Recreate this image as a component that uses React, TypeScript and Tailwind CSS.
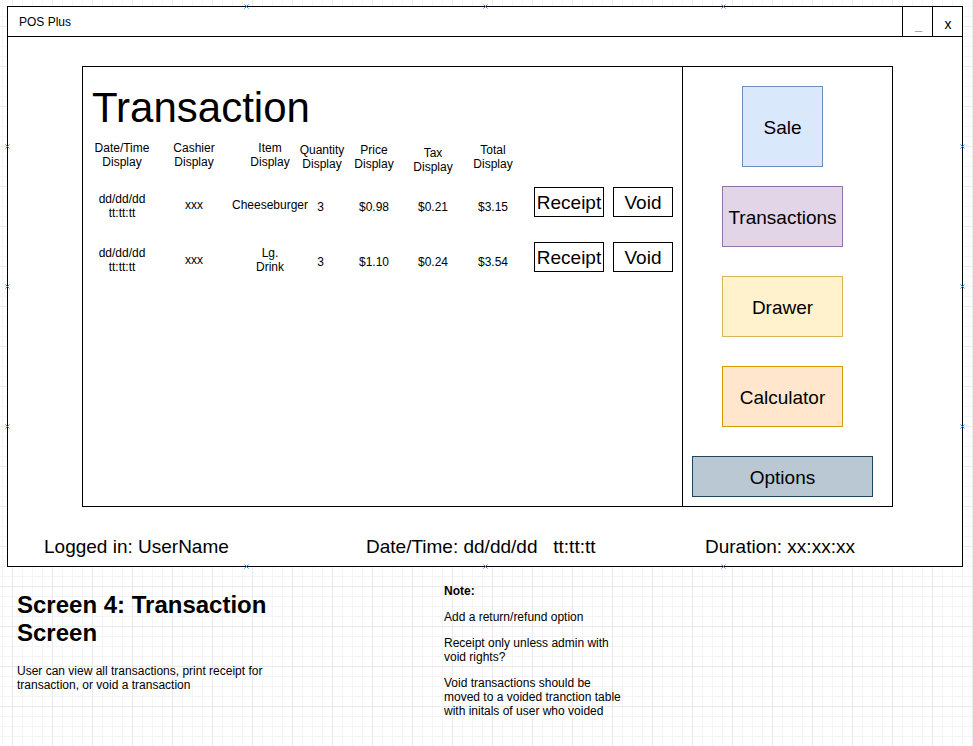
import React from 'react'

// draw.io connection markers sitting on the window frame
const markers: [number, number][] = [
  [246, 6], [485, 6], [723, 6],
  [7, 146], [962, 146], [7, 286], [962, 286], [7, 426], [962, 426],
  [246, 566], [485, 566], [723, 566],
]

function Marker({ x, y }: { x: number; y: number }) {
  return (
    <svg
      className="absolute"
      style={{ left: x - 3, top: y - 3 }}
      width="7"
      height="7"
      viewBox="0 0 7 7"
      aria-hidden="true"
    >
      <path d="M1.5 1.5 L5.5 5.5 M5.5 1.5 L1.5 5.5" stroke="#3b82d6" strokeWidth="1" fill="none" />
    </svg>
  )
}

function TxRow({
  first,
  date,
  cashier,
  item,
  itemTop,
  qty,
  price,
  tax,
  total,
}: {
  first?: boolean
  date: string
  cashier: string
  item: string[]
  itemTop: string
  qty: string
  price: string
  tax: string
  total: string
}) {
  return (
    <div className={`flex h-[30px] items-start pl-[3px] text-[12px] leading-[14px] ${first ? '' : 'mt-[25px]'}`}>
      <div className={`flex w-[72px] flex-col items-center whitespace-nowrap ${first ? 'mt-[5px]' : 'mt-[4px]'}`}>
        <span>{date}</span>
        <span>tt:tt:tt</span>
      </div>
      <div className="mt-[11px] flex w-[72px] justify-center">{cashier}</div>
      <div className={`flex w-[80px] flex-col items-center whitespace-nowrap ${itemTop}`}>
        {item.map((l) => (
          <span key={l}>{l}</span>
        ))}
      </div>
      <div className="mt-[13px] flex w-[24px] justify-center pr-[3px]">{qty}</div>
      <div className="mt-[13px] flex w-[80px] justify-center">{price}</div>
      <div className="mt-[13px] flex w-[38px] justify-center">{tax}</div>
      <div className="mt-[13px] flex w-[82px] justify-center">{total}</div>
      <button className="flex h-[30px] w-[70px] items-center justify-center border border-black bg-white pt-[2px] text-[19px] leading-[22px]">
        Receipt
      </button>
      <button className="ml-[9px] flex h-[30px] w-[60px] items-center justify-center border border-black bg-white pt-[2px] text-[19px] leading-[22px]">
        Void
      </button>
    </div>
  )
}

function HeaderCell({ a, w, top }: { a: string; w: string; top: string }) {
  return (
    <div className={`flex flex-col items-center whitespace-nowrap ${w} ${top}`}>
      <span>{a}</span>
      <span>Display</span>
    </div>
  )
}

export default function App() {
  return (
    <div
      className="
        relative h-[746px] w-[973px] overflow-hidden bg-white pt-[6px] text-black
        font-['Liberation_Sans',Arial,sans-serif]
        bg-[linear-gradient(to_right,#eaeaea_1px,transparent_1px),linear-gradient(to_bottom,#eaeaea_1px,transparent_1px),linear-gradient(to_right,#f5f5f5_1px,transparent_1px),linear-gradient(to_bottom,#f5f5f5_1px,transparent_1px)]
        bg-[size:40px_40px,40px_40px,10px_10px,10px_10px]
        bg-[position:12px_0,0_26px,2px_0,0_6px]
      "
    >
      {/* window */}
      <div className="ml-[7px] flex h-[561px] w-[956px] flex-col border border-black bg-white">
        <div className="flex h-[30px] shrink-0 border-b border-black">
          <div className="flex flex-1 items-center pl-[11px] text-[12px] leading-[14px]">POS Plus</div>
          <div className="flex w-[30px] justify-center border-l border-black pl-[2px] pt-[10px] text-[13px] leading-[15px] text-[#9a9a9a]">
            _
          </div>
          <div className="flex w-[30px] justify-center border-l border-black pl-[1px] pt-[10px] text-[14px] leading-[15px]">
            x
          </div>
        </div>

        <div className="ml-[74px] mt-[29px] flex h-[441px] w-[811px] shrink-0 border border-black">
          {/* transactions list */}
          <div className="w-[599px]">
            <h1 className="mt-[20px] h-[42px] pl-[9px] text-[42px] leading-[42px] font-normal">Transaction</h1>

            <div className="mt-[12px] flex h-[46px] items-start pl-[3px] text-[12px] leading-[14px]">
              <HeaderCell a="Date/Time" w="w-[72px]" top="mt-0" />
              <HeaderCell a="Cashier" w="w-[72px]" top="mt-0" />
              <HeaderCell a="Item" w="w-[80px]" top="mt-0" />
              <HeaderCell a="Quantity" w="w-[24px]" top="mt-[2px]" />
              <HeaderCell a="Price" w="w-[80px]" top="mt-[2px]" />
              <HeaderCell a="Tax" w="w-[38px]" top="mt-[5px]" />
              <HeaderCell a="Total" w="w-[82px]" top="mt-[2px]" />
            </div>

            <TxRow
              first
              date="dd/dd/dd"
              cashier="xxx"
              item={['Cheeseburger']}
              itemTop="mt-[11px]"
              qty="3"
              price="$0.98"
              tax="$0.21"
              total="$3.15"
            />
            <TxRow
              date="dd/dd/dd"
              cashier="xxx"
              item={['Lg.', 'Drink']}
              itemTop="mt-[4px]"
              qty="3"
              price="$1.10"
              tax="$0.24"
              total="$3.54"
            />
          </div>

          {/* nav */}
          <div className="flex flex-1 flex-col items-center border-l border-black pr-[10px] pt-[19px] text-[19px] leading-[22px]">
            <button className="flex h-[81px] w-[81px] items-center justify-center border border-[#6c8ebf] bg-[#dae8fc] pt-[2px]">
              Sale
            </button>
            <button className="mt-[19px] flex h-[61px] w-[121px] items-center justify-center border border-[#9673a6] bg-[#e1d5e7] pt-[2px]">
              Transactions
            </button>
            <button className="mt-[29px] flex h-[61px] w-[121px] items-center justify-center border border-[#d6b656] bg-[#fff2cc] pt-[2px]">
              Drawer
            </button>
            <button className="mt-[29px] flex h-[61px] w-[121px] items-center justify-center border border-[#d79b00] bg-[#ffe6cc] pt-[2px]">
              Calculator
            </button>
            <button className="mt-[29px] flex h-[41px] w-[181px] items-center justify-center border border-[#23445d] bg-[#bac8d3] pt-[2px]">
              Options
            </button>
          </div>
        </div>

        <div className="mt-[29px] flex pl-[36px] text-[19px] leading-[22px]">
          <span className="w-[322px]">Logged in: UserName</span>
          <span className="w-[339px] whitespace-pre">Date/Time: dd/dd/dd   tt:tt:tt</span>
          <span>Duration: xx:xx:xx</span>
        </div>
      </div>

      {/* annotations */}
      <div className="flex pl-[17px]">
        <div className="mt-[24px] w-[427px]">
          <h2 className="w-[260px] text-[24px] leading-[28px] font-bold">Screen 4: Transaction Screen</h2>
          <p className="mt-[17px] w-[260px] text-[12px] leading-[14px]">
            User can view all transactions, print receipt for transaction, or void a transaction
          </p>
        </div>
        <div className="mt-[17px] flex flex-col gap-[12px] whitespace-nowrap text-[12px] leading-[14px]">
          <p className="font-bold">Note:</p>
          <p>Add a return/refund option</p>
          <p>
            Receipt only unless admin with
            <br />
            void rights?
          </p>
          <p>
            Void transactions should be
            <br />
            moved to a voided tranction table
            <br />
            with initals of user who voided
          </p>
        </div>
      </div>

      {markers.map(([x, y]) => (
        <Marker key={`${x}-${y}`} x={x} y={y} />
      ))}
    </div>
  )
}
